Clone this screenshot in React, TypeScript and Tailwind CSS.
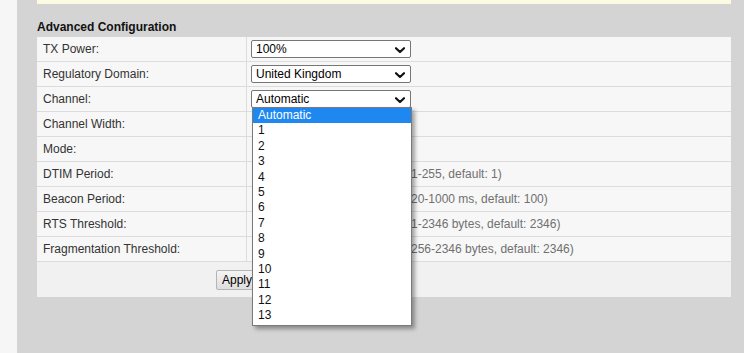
import React from "react";

const font = { fontFamily: '"Liberation Sans", Arial, sans-serif' };

function Chevron() {
  return (
    <svg width="10" height="7" viewBox="0 0 10 7" className="absolute right-[5px] top-[6px]">
      <path d="M1 1.2 L5 5 L9 1.2" fill="none" stroke="#111" strokeWidth="2.2" strokeLinecap="round" strokeLinejoin="round" />
    </svg>
  );
}

function FakeSelect({ value }: { value: string }) {
  return (
    <div className="relative w-[160px] h-[18px] border border-[#767676] rounded-[2px] bg-white text-[12px] leading-[16px] pl-[4px] text-black">
      {value}
      <Chevron />
    </div>
  );
}

function Covered() {
  return <div className="w-[160px] h-[18px]" />;
}

function Hint({ text }: { text: string }) {
  return (
    <div className="flex items-center">
      <div className="w-[150px] h-[18px]" />
      <span className="ml-[6px] text-[12px] text-[#707070]">{text}</span>
    </div>
  );
}

const rows: { label: string; value: React.ReactNode }[] = [
  { label: "TX Power:", value: <FakeSelect value="100%" /> },
  { label: "Regulatory Domain:", value: <FakeSelect value="United Kingdom" /> },
  { label: "Channel:", value: <FakeSelect value="Automatic" /> },
  { label: "Channel Width:", value: <Covered /> },
  { label: "Mode:", value: <Covered /> },
  { label: "DTIM Period:", value: <Hint text="(1-255, default: 1)" /> },
  { label: "Beacon Period:", value: <Hint text="(20-1000 ms, default: 100)" /> },
  { label: "RTS Threshold:", value: <Hint text="(1-2346 bytes, default: 2346)" /> },
  { label: "Fragmentation Threshold:", value: <Hint text="(256-2346 bytes, default: 2346)" /> },
];

const options = ["Automatic", "1", "2", "3", "4", "5", "6", "7", "8", "9", "10", "11", "12", "13"];

export default function App() {
  return (
    <div className="relative w-[744px] h-[353px] flex overflow-hidden text-[#222]" style={font}>
      <div className="w-[17px] bg-[#f6f6f6]" />
      <div className="flex-1 bg-[#d4d4d4] pl-[20px] pr-[13px]">
        <div className="h-[4px] bg-[#fbfbe4]" />
        <div className="mt-[16px] mb-[3px] h-[14px] text-[12px] leading-[14px] font-bold text-[#111]">
          Advanced Configuration
        </div>
        <div className="bg-[#f7f7f7]">
          {rows.map((r) => (
            <div key={r.label} className="flex h-[25px] border-b border-[#dcdcdc]">
              <div className="w-[210px] border-r border-[#dcdcdc] pl-[6px] flex items-center text-[12px] text-[#333]">
                {r.label}
              </div>
              <div className="flex-1 pl-[4px] flex items-center">{r.value}</div>
            </div>
          ))}
          <div className="h-[35px] bg-[#f1f1f1] flex items-center pl-[179px]">
            <div className="h-[20px] px-[5px] border border-[#b5b5b5] rounded-[2px] bg-gradient-to-b from-[#f4f4f4] to-[#dedede] text-[12px] leading-[18px] text-black">
              Apply
            </div>
          </div>
        </div>
      </div>
      <div className="absolute left-[252px] top-[107px] w-[160px] h-[219px] bg-white border border-[#7a7a7a] shadow-[3px_3px_4px_rgba(0,0,0,0.35)]">
        {options.map((o, i) => (
          <div
            key={o}
            className={
              "h-[15.4px] pl-[5px] text-[12px] leading-[15.4px] " +
              (i === 0 ? "bg-[#1e87f0] text-white" : "text-[#111]")
            }
          >
            {o}
          </div>
        ))}
      </div>
    </div>
  );
}
